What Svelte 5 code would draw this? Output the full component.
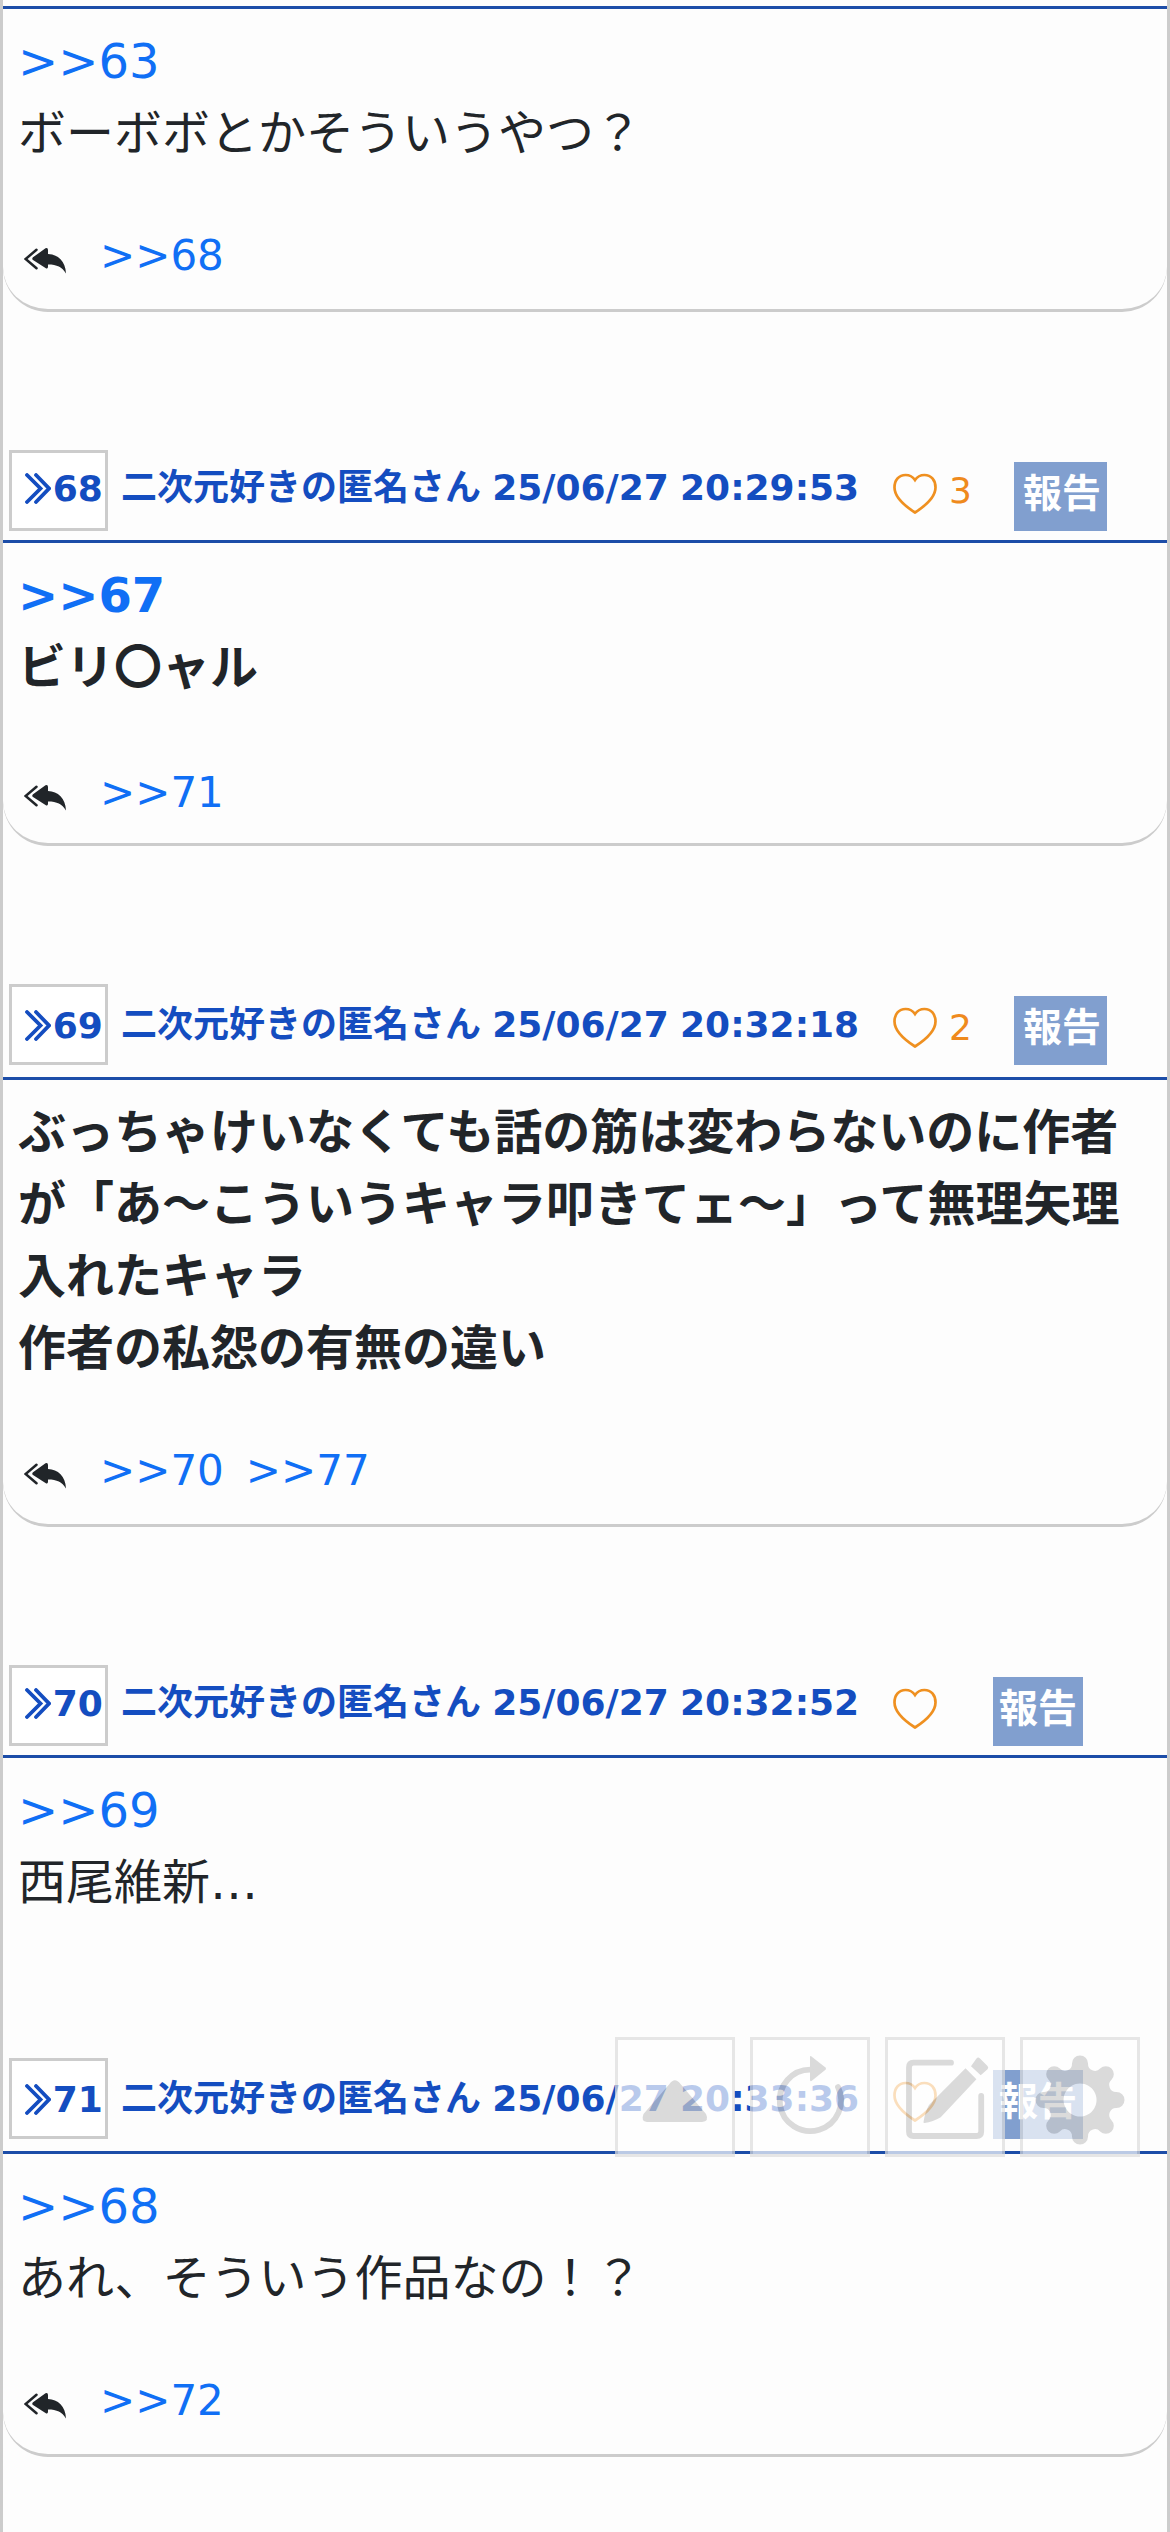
<script>
  const posts = [
    { refs: ['>>63'], lines: ['ボーボボとかそういうやつ？'], replies: ['>>68'], bare: true },
    { id: 68, time: '20:29:53', likes: 3, refs: ['>>67'], lines: ['ビリ〇ャル'], replies: ['>>71'], strong: true, sunk: true },
    {
      id: 69, time: '20:32:18', likes: 2, refs: [],
      lines: ['ぶっちゃけいなくても話の筋は変わらないのに作者が「あ～こういうキャラ叩きてェ～」って無理矢理入れたキャラ', '作者の私怨の有無の違い'],
      replies: ['>>70', '>>77'], strong: true, low: true
    },
    { id: 70, time: '20:32:52', refs: ['>>69'], lines: ['西尾維新…'], replies: [] },
    { id: 71, time: '20:33:36', refs: ['>>68'], lines: ['あれ、そういう作品なの！？'], replies: ['>>72'], low: true }
  ];

  // Eight rounded teeth on a circle around (60, 63), joined by concave arcs.
  function gearPath() {
    const at = (angle, radial, side) =>
      `${(60 + radial * Math.cos(angle) - side * Math.sin(angle)).toFixed(2)} ${(63 + radial * Math.sin(angle) + side * Math.cos(angle)).toFixed(2)}`;
    let d = '';
    for (let i = 0; i < 8; i++) {
      const a = (i * Math.PI) / 4;
      d += i ? `A7 7 0 0 0 ${at(a, 36.5, -8)}` : `M${at(a, 36.5, -8)}`;
      d += `A8 8 0 0 1 ${at(a, 36.5, 8)}`;
    }
    return d + `A7 7 0 0 0 ${at(0, 36.5, -8)}ZM60 46.500A16.500 16.500 0 1 0 60.100 46.500Z`;
  }
</script>

<main>
  {#each posts as post}
    <article>
      {#if !post.bare}
        <header class:low={post.low}>
          <span class="num">
            <svg viewBox="0 0 26 31"><path d="M2 2 15.500 15.500 2 29M11 2 24 15.500 11 29" /></svg>{post.id}
          </span>
          <span class="who">二次元好きの匿名さん 25/06/27 {post.time}</span>
          <svg class="heart" viewBox="0 0 44 44"><path d="M22 39.500C15 35 1.500 26 1.500 14.500C1.500 7 6 2 12.500 2C17 2 20 4 22 7C24 4 27 2 31.500 2C38 2 42.500 7 42.500 14.500C42.500 26 29 35 22 39.500Z" /></svg>
          <span class="likes" class:none={!post.likes}>{post.likes ?? ''}</span>
          <span class="report" class:narrow={!post.likes}>報告</span>
        </header>
      {/if}
      <section class:strong={post.strong} class:open={!post.replies.length}>
        {#each post.refs as r}<a href="#top">{r}</a>{/each}
        {#each post.lines as line}<p>{line}</p>{/each}
        {#if post.replies.length}
          <footer class:sunk={post.sunk}>
            <svg class="reply" viewBox="0 0 42 26"><path class="tail" d="M12.500 1.800 1.600 11 12.500 20.300" /><path d="M21.500 .3Q24 -.5 24 2V6C34 6.500 41.500 13 42 25.500C38 19 33 16.500 24 16.500V18.500Q24 21.500 21.500 20L9 12Q7.500 10.700 9 9.300Z" /></svg>
            {#each post.replies as r}<a href="#top">{r}</a>{/each}
          </footer>
        {/if}
      </section>
    </article>
  {/each}
</main>

<nav>
  <button aria-label="top"><svg viewBox="3 3 114 114"><path d="M54.500 47Q59.800 39.500 65.500 47L91 77Q94.500 84.500 87 85H32Q25.500 84.500 28.500 77Z" /></svg></button>
  <button aria-label="reload"><svg viewBox="3 3 114 114"><path d="M60 20Q60 18.500 61.500 19.500L75.500 30.500Q76.500 31.700 75.500 32.700L61.500 44Q60 44.500 60 43Z" /><path class="line" d="M61 32.700A30.700 30.700 0 1 0 88 50" /></svg></button>
  <button aria-label="write"><svg viewBox="3 3 114 114"><path class="line" d="M66 25.700H28.500Q24 25.700 24 30.500V94.500Q24 99 28.500 99H91.500Q96.200 99 96.200 94.500V59" /><path d="M80.500 31.300 91.400 42.300 55.700 80.300Q48 85 39.500 86Q38 86 38.600 84.500Q40 75 44 68ZM86 29.300 91.500 21.500Q93 19.500 95 21.500L102.500 29Q104 30.700 102.500 32.300L95.700 38.300Z" /></svg></button>
  <button aria-label="settings"><svg viewBox="3 3 114 114"><path fill-rule="evenodd" d={gearPath()} /></svg></button>
</nav>

<style>
  :global(body) { background: #fdfdfd; overflow: hidden; }
  * { box-sizing: border-box; }
  main {
    width: 1170px; height: 2532px; overflow: hidden; padding-top: 6px;
    border-left: 3px solid #ccc; border-right: 3px solid #ccc;
    font: 48px/72px "DejaVu Sans", "Noto Sans CJK JP", sans-serif; color: #212529;
  }
  header { display: flex; align-items: flex-start; height: 228px; padding: 138px 0 0 6px; }
  header.low { height: 231px; }
  section {
    padding: 16px 15px 0; border-top: 3px solid #1c4da8;
    border-bottom: 3px solid #ccc; border-radius: 0 0 45px 45px;
  }
  section.open { border-bottom: 0; height: 165px; }
  a { display: block; color: #106ff5; text-decoration: none; }
  p { margin: 0; }
  .strong > a, .strong > p { font-weight: 700; }
  footer { display: flex; align-items: center; height: 140px; padding: 33px 0 0 6px; gap: 22px; }
  footer.sunk { padding-top: 39px; }
  footer a { font-size: 42px; }
  .reply { width: 42px; height: 26px; margin: 10px 12px 0 0; fill: #212529; }
  .tail { fill: none; stroke: #212529; stroke-width: 2.5; stroke-linecap: round; }
  .num {
    display: flex; align-items: center; width: 99px; height: 81px; padding: 0 0 4px 13px;
    border: 3px solid #ccc; background: #fff; font-size: 36px; font-weight: 700; color: #144dc0;
  }
  .low .num { padding: 2px 0 0 13px; }
  .num svg { width: 26px; height: 31px; margin-right: 1.7px; fill: none; stroke: currentColor; stroke-width: 3.8; stroke-linecap: round; }
  .who {
    margin: 2px 0 0 13px; width: 740px; white-space: nowrap; word-spacing: -1.3px;
    font-size: 36px; font-weight: 700; color: #144dc0;
  }
  .low .who { margin-top: 5px; }
  .heart { width: 44px; height: 44px; margin: 23px 0 0 32px; fill: none; stroke: #ef9020; stroke-width: 2.7; }
  .likes { width: 77px; padding-left: 12px; font-size: 36px; color: #ef8a1d; margin-top: 5px; }
  .low .likes { margin-top: 8px; }
  .likes.none { width: 56px; }
  .report {
    margin-top: 12px; width: 93px; height: 69px; padding-left: 9px; background: #819fcf; color: #fff;
    font-size: 39px; line-height: 63px; font-weight: 700;
  }
  .report.narrow { width: 90px; padding-left: 6px; }
  nav { position: absolute; left: 615px; top: 2037px; display: flex; gap: 15px; opacity: .7; }
  button { width: 120px; height: 120px; padding: 0; background: #fff; border: 3px solid #ddd; }
  button svg { width: 100%; height: 100%; display: block; fill: #ccc; }
  button .line { fill: none; stroke: #ccc; stroke-width: 5.8; stroke-linecap: round; }
</style>
